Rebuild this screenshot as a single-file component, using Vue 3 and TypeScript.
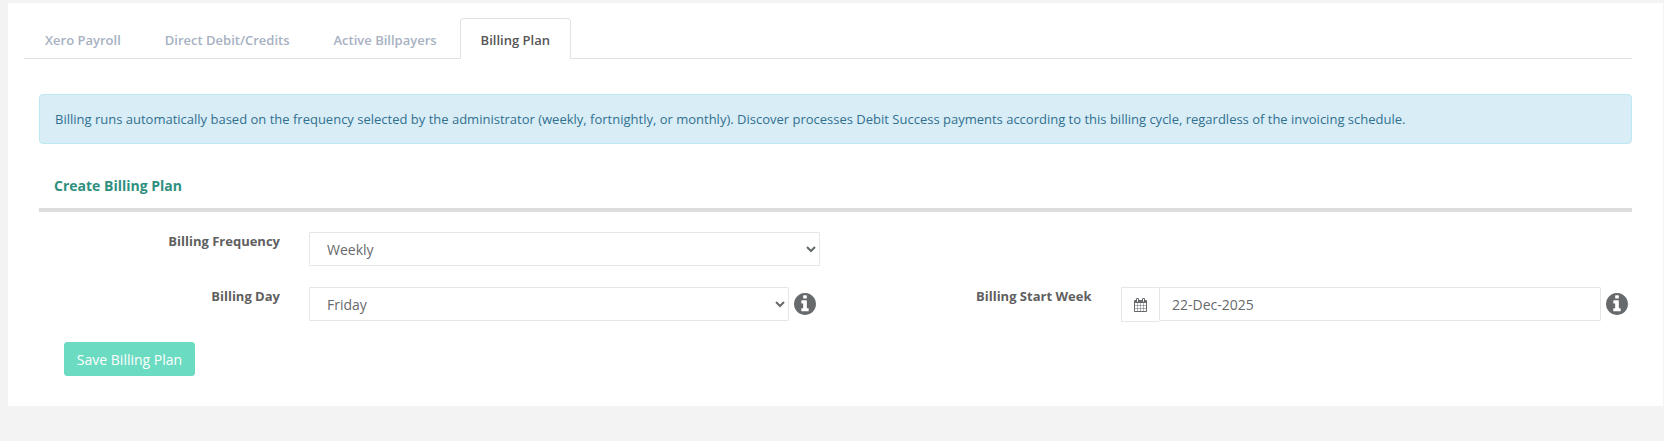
<script setup lang="ts">
import { ref } from 'vue'

const tabs = ['Xero Payroll', 'Direct Debit/Credits', 'Active Billpayers', 'Billing Plan']
const activeTab = ref('Billing Plan')
const frequency = ref('Weekly')
const day = ref('Friday')
const startWeek = ref('22-Dec-2025')
const infoPath =
  'M1152 1376v-160q0-14-9-23t-23-9h-96v-512q0-14-9-23t-23-9h-320q-14 0-23 9t-9 23v160q0 14 9 23t23 9h96v320h-96q-14 0-23 9t-9 23v160q0 14 9 23t23 9h448q14 0 23-9t9-23zm-128-896v-160q0-14-9-23t-23-9h-192q-14 0-23 9t-9 23v160q0 14 9 23t23 9h192q14 0 23-9t9-23zm640 416q0 209-103 385.5t-279.5 279.5-385.5 103-385.5-103-279.5-279.5-103-385.5 103-385.5 279.5-279.5 385.5-103 385.5 103 279.5 279.5 103 385.5z'
const calendarPath =
  'M192 1664h288v-288h-288v288zm352 0h320v-288h-320v288zm-352-352h288v-320h-288v320zm352 0h320v-320h-320v320zm-352-384h288v-288h-288v288zm736 736h320v-288h-320v288zm-384-736h320v-288h-320v288zm768 736h288v-288h-288v288zm-384-352h320v-320h-320v320zm-352-864v-288q0-13-9.5-22.5t-22.5-9.5h-64q-13 0-22.5 9.5t-9.5 22.5v288q0 13 9.5 22.5t22.5 9.5h64q13 0 22.5-9.5t9.5-22.5zm736 864h288v-320h-288v320zm-384-384h320v-288h-320v288zm384 0h288v-288h-288v288zm32-480v-288q0-13-9.5-22.5t-22.5-9.5h-64q-13 0-22.5 9.5t-9.5 22.5v288q0 13 9.5 22.5t22.5 9.5h64q13 0 22.5-9.5t9.5-22.5zm384-64v1280q0 52-38 90t-90 38h-1408q-52 0-90-38t-38-90v-1280q0-52 38-90t90-38h128v-96q0-66 47-113t113-47h64q66 0 113 47t47 113v96h384v-96q0-66 47-113t113-47h64q66 0 113 47t47 113v96h128q52 0 90 38t38 90z'
</script>

<template>
  <div class="page">
    <main class="card">
      <nav class="tabs">
        <a v-for="tab in tabs" :key="tab" class="tab" :class="{ active: tab === activeTab }">{{ tab }}</a>
      </nav>
      <section class="content">
        <div class="alert">
          Billing runs automatically based on the frequency selected by the administrator (weekly, fortnightly, or monthly). Discover processes Debit Success payments according to this billing cycle, regardless of the invoicing schedule.
        </div>
        <h2 class="heading">Create Billing Plan</h2>
        <form class="form" @submit.prevent>
          <div class="row">
            <label class="label">Billing Frequency</label>
            <select v-model="frequency" class="control freq">
              <option>Weekly</option>
              <option>Fortnightly</option>
              <option>Monthly</option>
            </select>
          </div>
          <div class="row">
            <label class="label">Billing Day</label>
            <select v-model="day" class="control daysel">
              <option>Monday</option>
              <option>Friday</option>
            </select>
            <svg class="info" viewBox="128 128 1536 1536"><path :d="infoPath" /></svg>
            <label class="label2">Billing Start Week</label>
            <span class="addon">
              <svg class="cal" viewBox="64 0 1664 1792"><path :d="calendarPath" /></svg>
            </span>
            <input v-model="startWeek" class="control date" type="text" />
            <svg class="info" viewBox="128 128 1536 1536"><path :d="infoPath" /></svg>
          </div>
          <button class="save" type="submit">Save Billing Plan</button>
        </form>
      </section>
    </main>
  </div>
</template>

<style>
html, body { margin: 0; background: #f3f3f3; }
</style>

<style scoped>
.page {
  height: 441px;
  box-sizing: border-box;
  padding: 3px 1px 0 8px;
  background: #f3f3f3;
  font-family: "Open Sans", "Noto Sans", sans-serif;
  color: #676a6c;
  overflow: hidden;
}
.card {
  height: 403px;
  box-sizing: border-box;
  background: #fff;
  padding-top: 15px;
}
.tabs {
  display: flex;
  margin: 0 31px 0 16px;
  height: 40px;
  border-bottom: 1px solid #e0e3e6;
}
.tab {
  box-sizing: border-box;
  height: 41px;
  padding: 12px 22px 0 20px;
  font-size: 13px;
  line-height: 18px;
  font-weight: 600;
  color: #a7b1c2;
  border: 1px solid transparent;
  border-bottom: 0;
}
.tab.active {
  color: #555;
  background: #fff;
  border-color: #e0e3e6;
  border-radius: 4px 4px 0 0;
  padding-right: 20px;
}
.content {
  padding: 35px 31px 0;
}
.alert {
  box-sizing: border-box;
  height: 50px;
  padding: 15px 15px;
  font-size: 13px;
  line-height: 18px;
  color: #31708f;
  background: #d9edf7;
  border: 1px solid #bce8f1;
  border-radius: 4px;
}
.heading {
  margin: 0;
  height: 68px;
  box-sizing: border-box;
  padding: 33px 15px 0;
  font-size: 14px;
  line-height: 18px;
  font-weight: 700;
  color: #2f8f7f;
  border-bottom: 4px solid #dcdcdc;
}
.form {
  padding-top: 20px;
}
.row {
  display: flex;
  align-items: flex-start;
  margin-bottom: 21px;
  height: 34px;
}
.label {
  width: 241px;
  margin-right: 29px;
  text-align: right;
  font-size: 13px;
  line-height: 18px;
  font-weight: 700;
  color: #5f5f5f;
}
.label2 {
  width: 115px;
  margin: 0 30px 0 160px;
  font-size: 13px;
  line-height: 18px;
  font-weight: 700;
  color: #5f5f5f;
  white-space: nowrap;
}
.control {
  box-sizing: border-box;
  height: 34px;
  background: #fff;
  border: 1px solid #e5e6e7;
  border-radius: 1px;
  padding: 0 13px;
  font-family: inherit;
  font-size: 14px;
  color: #676a6c;
  outline: none;
}
.freq { width: 511px; }
.daysel { width: 480px; }
.date { width: 442px; padding: 0 12px; }
.addon {
  box-sizing: border-box;
  width: 38px;
  height: 35px;
  display: flex;
  align-items: center;
  justify-content: center;
  border: 1px solid #e5e6e7;
  border-right: 0;
}
.cal { width: 13px; height: 14px; fill: #676a6c; }
.info {
  width: 22px;
  height: 22px;
  margin: 6px 0 0 5px;
  fill: #676a6c;
  flex: none;
}
.save {
  display: block;
  box-sizing: border-box;
  width: 131px;
  height: 34px;
  margin: 0 0 0 25px;
  background: #6bdbc1;
  border: 1px solid #6bdbc1;
  border-radius: 3px;
  color: #fff;
  font-family: inherit;
  font-size: 14px;
  padding: 0;
}
</style>
